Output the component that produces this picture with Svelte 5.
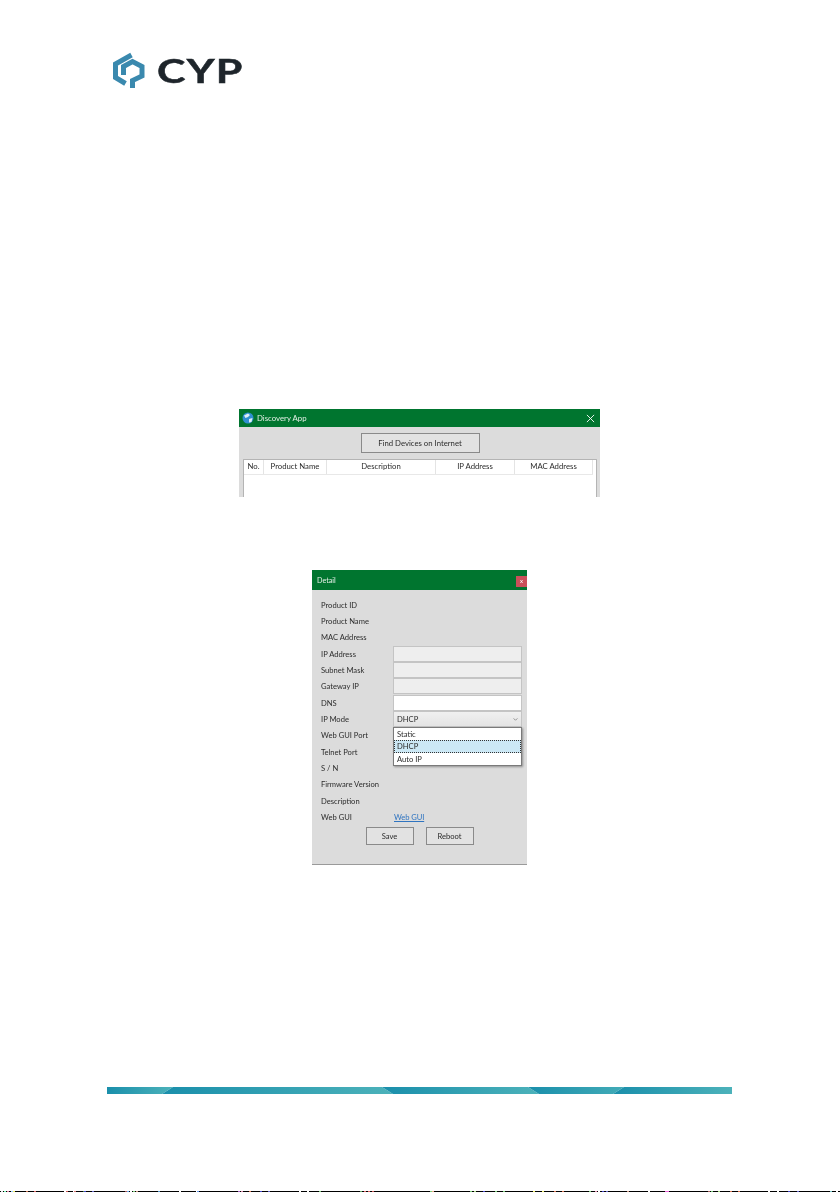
<script>
  const columns = [
    { label: 'No.', width: 20 },
    { label: 'Product Name', width: 63 },
    { label: 'Description', width: 109 },
    { label: 'IP Address', width: 79 },
    { label: 'MAC Address', width: 78 }
  ];

  const fields = [
    { label: 'Product ID' },
    { label: 'Product Name' },
    { label: 'MAC Address' },
    { label: 'IP Address', input: 'off' },
    { label: 'Subnet Mask', input: 'off' },
    { label: 'Gateway IP', input: 'off' },
    { label: 'DNS', input: 'on' },
    { label: 'IP Mode', select: 'DHCP' },
    { label: 'Web GUI Port' },
    { label: 'Telnet Port' },
    { label: 'S / N' },
    { label: 'Firmware Version' },
    { label: 'Description' },
    { label: 'Web GUI', link: 'Web GUI' }
  ];

  const ipModes = ['Static', 'DHCP', 'Auto IP'];

  // footer bar pieces, each one restarts the teal gradient
  const barPieces = [
    { id: 'a', pts: '0,0 66,0 55,7 0,7', x1: 0, x2: 66 },
    { id: 'b', pts: '66,0 275,0 286,7 55,7', x1: 55, x2: 286 },
    { id: 'c', pts: '275,0 421,0 432,7 286,7', x1: 275, x2: 432 },
    { id: 'd', pts: '421,0 517,0 506,7 432,7', x1: 421, x2: 540 },
    { id: 'e', pts: '517,0 625,0 625,7 506,7', x1: 506, x2: 625 }
  ];

  // scan noise along the bottom edge of the page
  const edgeTicks = [
    [1, '#e8e8e8'], [4, '#7fb'], [7, '#d8a'], [11, '#9cf'], [13, '#ee6'],
    [26, '#c75'], [34, '#d66'], [64, '#fff'], [66, '#c55'], [73, '#fff'], [74, '#d77'],
    [83, '#484'], [84, '#44c'], [92, '#66c'], [125, '#a55'], [127, '#6ae'], [130, '#fff'],
    [133, '#7c7'], [136, '#c98'], [158, '#59c'], [179, '#fff'], [196, '#fff'], [197, '#69e'],
    [238, '#a6c'], [241, '#d8a'], [249, '#d75'], [260, '#44c'], [268, '#66c'], [299, '#fff'],
    [307, '#fff'], [319, '#7c7'], [360, '#6a6'], [364, '#d66'], [368, '#d66'], [372, '#c55'],
    [430, '#7c7'], [432, '#ea8'], [470, '#7c7'], [474, '#ad8'], [483, '#44c'], [495, '#7c7'],
    [503, '#7c7'], [533, '#ee6'], [542, '#ee6'], [554, '#d75'], [562, '#d75'], [589, '#7c7'],
    [595, '#d8a'], [598, '#fff'], [602, '#44c'], [606, '#66c'], [627, '#c98'], [648, '#fff'],
    [665, '#e6d'], [667, '#e6d'], [708, '#a66'], [711, '#7c7'], [718, '#ad8'], [730, '#d75'],
    [738, '#d75'], [768, '#fff'], [777, '#fff'], [788, '#44c'], [797, '#66c'], [830, '#7cc'],
    [836, '#fff']
  ];
</script>

<div class="page">
  <header class="brand">
    <svg class="mark" viewBox="0 0 34 36" width="34" height="36" aria-hidden="true">
      <g fill="none" stroke="#3a89ae" stroke-width="5">
        <path d="M18.5 3 2.5 12v13.5L12.5 31.5" />
        <path d="M10.5 23V14.5L19.5 9.5 29 14.5V24L19.5 28.5V36" />
      </g>
    </svg>
    <span class="wordmark">CYP</span>
  </header>

  <section class="window discovery">
    <div class="titlebar">
      <svg class="globe" viewBox="0 0 12 12" width="12" height="12" aria-hidden="true">
        <circle cx="6" cy="6" r="5.5" fill="#2f8fd0" />
        <path d="M2 3.5 6 1.5 8 3 6 5 3.5 6ZM7 7l3.5-1-1 4-2.5.5Z" fill="#dfeef5" />
      </svg>
      <span>Discovery App</span>
      <svg class="close" viewBox="0 0 10 10" width="9" height="9" aria-hidden="true">
        <path d="M1 1l8 8M9 1 1 9" stroke="#fff" stroke-width="1" />
      </svg>
    </div>
    <div class="discovery-body">
      <button class="find">Find Devices on Internet</button>
      <div class="table">
        <div class="thead">
          {#each columns as col}
            <span style="width: {col.width}px">{col.label}</span>
          {/each}
        </div>
      </div>
    </div>
  </section>

  <section class="window detail">
    <div class="titlebar">
      <span>Detail</span>
      <span class="detail-close">x</span>
    </div>
    <div class="detail-body">
      {#each fields as field}
        <div class="row">
          <span class="label">{field.label}</span>
          {#if field.input}
            <span class="input {field.input}"></span>
          {:else if field.select}
            <span class="select">
              {field.select}
              <svg viewBox="0 0 6 4" width="5" height="3" aria-hidden="true">
                <path d="M.5.5 3 3 5.5.5" fill="none" stroke="#777" />
              </svg>
              <span class="popup">
                {#each ipModes as mode}
                  <span class="option" class:selected={mode === field.select}>{mode}</span>
                {/each}
              </span>
            </span>
          {:else if field.link}
            <span class="link">{field.link}</span>
          {/if}
        </div>
      {/each}
      <div class="actions">
        <button>Save</button>
        <button>Reboot</button>
      </div>
    </div>
  </section>

  <svg class="bar" viewBox="0 0 625 7" width="625" height="7" aria-hidden="true">
    <defs>
      {#each barPieces as piece}
        <linearGradient id="bar-{piece.id}" gradientUnits="userSpaceOnUse" x1={piece.x1} x2={piece.x2} y1="0" y2="0">
          <stop offset="0" stop-color="#1a8fab" />
          <stop offset="1" stop-color="#4cb2ba" />
        </linearGradient>
      {/each}
    </defs>
    {#each barPieces as piece}
      <polygon points={piece.pts} fill="url(#bar-{piece.id})" />
    {/each}
  </svg>

  <svg class="edge" viewBox="0 0 840 1" width="840" height="1" aria-hidden="true">
    <rect width="840" height="1" fill="#000" />
    {#each edgeTicks as [x, color]}
      <rect {x} width="2" height="1" fill={color} />
    {/each}
  </svg>
</div>

<style>
  :global(body) {
    margin: 0;
    background: #fff;
  }

  .page {
    width: 840px;
    height: 1192px;
    display: flex;
    flex-direction: column;
    font-family: Lato, sans-serif;
    font-size: 7.6px;
    color: #2c2c2c;
    overflow: hidden;
  }

  .brand {
    display: flex;
    align-items: center;
    gap: 10px;
    margin: 52px 0 0 113px;
    height: 36px;
  }

  .wordmark {
    font-family: Lato, sans-serif;
    font-weight: 700;
    font-size: 33px;
    line-height: 36px;
    color: #1e252b;
    -webkit-text-stroke: 0.5px #1e252b;
    transform: scaleX(1.3);
    transform-origin: left center;
    letter-spacing: 1px;
  }

  .window {
    background: #dcdcdc;
    align-self: flex-start;
    filter: blur(0.3px);
  }

  .titlebar {
    background: #00752f;
    color: #e4efe6;
    display: flex;
    align-items: center;
  }

  .discovery {
    width: 361px;
    height: 88px;
    margin: 321px 0 0 239px;
    font-size: 7.75px;
  }

  .discovery .titlebar {
    height: 18px;
    padding: 0 5px 0 3px;
    gap: 3px;
    font-size: 7.8px;
  }

  .close {
    margin-left: auto;
  }

  .discovery-body {
    padding: 6px 3px 0 4px;
    display: flex;
    flex-direction: column;
    align-items: center;
    gap: 6px;
  }

  button {
    font: inherit;
    color: #2c2c2c;
    background: #e2e2e2;
    border: 1px solid #8a8a8a;
    padding: 0;
  }

  .find {
    width: 119px;
    height: 20px;
  }

  .table {
    width: 354px;
    height: 38px;
    box-sizing: border-box;
    background: #fff;
    border: 1px solid #b4b4b4;
    border-bottom: 0;
    border-radius: 1px 1px 0 0;
  }

  .thead {
    display: flex;
    height: 14px;
    margin-right: 3px;
    border-bottom: 1px solid #e8e8e8;
  }

  .thead span {
    box-sizing: border-box;
    text-align: center;
    line-height: 13px;
    border-right: 1px solid #e4e4e4;
  }

  .detail {
    width: 215px;
    height: 295px;
    margin: 73px 0 0 312px;
    border-bottom: 1px solid #9a9a9a;
    box-sizing: border-box;
  }

  .detail .titlebar {
    height: 20px;
    padding-left: 5px;
    font-size: 7.2px;
    justify-content: space-between;
  }

  .detail-close {
    width: 11px;
    height: 11px;
    margin-top: 3px;
    background: #c9505a;
    color: #fff;
    font-size: 6px;
    line-height: 10px;
    text-align: center;
  }

  .detail-body {
    padding: 6.5px 5px 0 9px;
  }

  .row {
    display: flex;
    align-items: center;
    height: 16.35px;
  }

  .label {
    width: 72px;
    flex: none;
  }

  .input,
  .select {
    width: 129px;
    height: 16px;
    box-sizing: border-box;
    border: 1px solid #c4c4c4;
  }

  .input.off {
    background: #eeeeee;
  }

  .input.on {
    background: #fff;
  }

  .select {
    position: relative;
    display: flex;
    align-items: center;
    justify-content: space-between;
    padding: 0 3px;
    background: linear-gradient(#f0f0f0, #e4e4e4);
  }

  .popup {
    position: absolute;
    top: 15px;
    left: -1px;
    width: 129px;
    height: 39px;
    box-sizing: border-box;
    display: flex;
    flex-direction: column;
    background: #fff;
    border: 1px solid #7a7a7a;
    box-shadow: 1px 1px 2px rgba(0, 0, 0, 0.35);
  }

  .option {
    height: 12.4px;
    line-height: 12px;
    padding-left: 3px;
  }

  .option.selected {
    background: #cce8f5;
    outline: 1px dotted #333;
    outline-offset: -1px;
  }

  .link {
    color: #2f74c0;
    text-decoration: underline;
    margin-left: 1px;
    letter-spacing: -0.1px;
  }

  .actions {
    display: flex;
    justify-content: center;
    gap: 12px;
    margin: 2px 0 0 -4px;
  }

  .actions button {
    width: 48px;
    height: 18px;
  }

  .bar {
    display: block;
    margin: 222px 0 0 107px;
    flex: none;
  }

  .edge {
    display: block;
    margin-top: auto;
    flex: none;
  }
</style>
